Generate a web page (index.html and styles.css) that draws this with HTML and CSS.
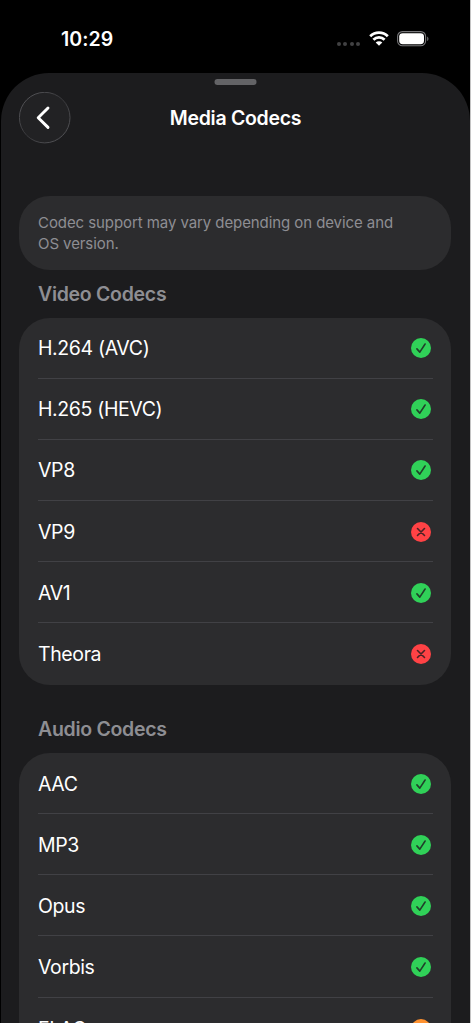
FILE: index.html
```html
<!DOCTYPE html>
<html lang="en">
<head>
<meta charset="utf-8">
<title>Media Codecs</title>
<link rel="stylesheet" href="styles.css">
</head>
<body>
<svg class="defs" width="0" height="0" aria-hidden="true">
  <symbol id="yes" viewBox="0 0 20 20"><circle cx="10" cy="10" r="10" fill="#30d158"/><path d="M5.9 10.9 8.8 14.1 14.1 6" fill="none" stroke="#20402a" stroke-width="1.6" stroke-linecap="round" stroke-linejoin="round"/></symbol>
  <symbol id="no" viewBox="0 0 20 20"><circle cx="10" cy="10" r="10" fill="#ff4245"/><path d="M6.5 6.5 13.5 13.5M13.5 6.5 6.5 13.5" fill="none" stroke="#4a2225" stroke-width="1.6" stroke-linecap="round"/></symbol>
  <symbol id="partial" viewBox="0 0 20 20"><circle cx="10" cy="10" r="10" fill="#ff9230"/><path d="M10 5.5V11M10 14v.2" fill="none" stroke="#4a3020" stroke-width="1.6" stroke-linecap="round"/></symbol>
</svg>
<div class="screen">
  <header class="status">
    <span class="time">10:29</span>
    <span class="signal"><i></i><i></i><i></i><i></i></span>
    <svg class="wifi" viewBox="0 0 20 15" width="20" height="15"><g fill="none" stroke="#fff" stroke-width="2.8"><path d="M1.2 5.2a12.6 12.6 0 0 1 17.6 0"/><path d="M4.4 8.7a8 8 0 0 1 11.2 0"/></g><path d="M6.7 11.6a4.7 4.7 0 0 1 6.6 0L10 14.8z" fill="#fff"/></svg>
    <svg class="battery" viewBox="0 0 32 16" width="32" height="16"><rect x=".6" y=".6" width="28" height="14.2" rx="4.8" fill="none" stroke="#77777a" stroke-width="1.1"/><rect x="2.2" y="2.2" width="24.8" height="11" rx="3.4" fill="#fff"/><path d="M30.2 5.4v4.6c1.7-.7 1.7-3.9 0-4.6z" fill="#77777a"/></svg>
  </header>
  <main class="sheet">
    <div class="grabber"></div>
    <nav class="nav">
      <button class="back" aria-label="Back"><svg viewBox="0 0 52 52" width="52" height="52"><defs><linearGradient id="rim" x1="0" y1="0" x2="1" y2="1"><stop offset="0" stop-color="#5a5a5e"/><stop offset=".5" stop-color="#39393c"/><stop offset="1" stop-color="#5a5a5e"/></linearGradient></defs><circle cx="25.7" cy="25.6" r="25.3" fill="#222224" stroke="url(#rim)"/><path d="M29 16 19.2 25.7 29 35.4" fill="none" stroke="#fff" stroke-width="2.9" stroke-linecap="round" stroke-linejoin="round"/></svg></button>
      <h1 class="title">Media Codecs</h1>
    </nav>
    <p class="card note">Codec support may vary depending on device and<br>OS version.</p>
    <h2 class="heading">Video Codecs</h2>
    <ul class="card list">
      <li class="row">H.264 (AVC)<svg class="mark"><use href="#yes"/></svg></li>
      <li class="row">H.265 (HEVC)<svg class="mark"><use href="#yes"/></svg></li>
      <li class="row">VP8<svg class="mark"><use href="#yes"/></svg></li>
      <li class="row">VP9<svg class="mark"><use href="#no"/></svg></li>
      <li class="row">AV1<svg class="mark"><use href="#yes"/></svg></li>
      <li class="row">Theora<svg class="mark"><use href="#no"/></svg></li>
    </ul>
    <h2 class="heading audio">Audio Codecs</h2>
    <ul class="card list">
      <li class="row">AAC<svg class="mark"><use href="#yes"/></svg></li>
      <li class="row">MP3<svg class="mark"><use href="#yes"/></svg></li>
      <li class="row">Opus<svg class="mark"><use href="#yes"/></svg></li>
      <li class="row">Vorbis<svg class="mark"><use href="#yes"/></svg></li>
      <li class="row">FLAC<svg class="mark"><use href="#partial"/></svg></li>
    </ul>
  </main>
</div>
</body>
</html>
```
FILE: styles.css
```css
* { box-sizing: border-box; margin: 0; padding: 0; }
html, body { height: 100%; overflow: hidden; }
body { background: #c4c4c4; font-family: Inter, "Liberation Sans", sans-serif; color: #fff; }
.defs { display: block; }
.screen { width: 470px; height: 1023px; background: #000; overflow: hidden; }
.status { height: 73px; display: flex; align-items: center; padding: 4px 41px 0 61px; }
.time { font-size: 19.5px; font-weight: 600; letter-spacing: 0.05px; margin-right: auto; }
.signal { display: flex; gap: 2.3px; margin: 10px 9px 0 0; }
.signal i { width: 4px; height: 4px; border-radius: 50%; background: #414143; }
.wifi { margin-right: 8px; }
.sheet { height: 950px; margin-left: 1px; padding: 6px 18px 0; background: #1c1c1e; border-radius: 48px 48px 0 0; overflow: hidden; }
.grabber { width: 42px; height: 6px; border-radius: 3px; background: #636366; margin: 0 auto; transform: translateX(-0.5px); }
.nav { display: grid; grid-template-columns: 52px 1fr 52px; align-items: center; margin-top: 6px; height: 53px; }
.back { width: 52px; height: 52px; border: 0; background: none; }
.back svg { display: block; }
.title { font-size: 19.5px; font-weight: 600; letter-spacing: -0.28px; text-align: center; }
.card { background: #2c2c2e; border-radius: 31px; margin-right: 0.6px; }
.note { margin-top: 52px; height: 74px; padding: 16px 19px 0; font-size: 15px; line-height: 21px; letter-spacing: -0.08px; color: #8e8e93; white-space: nowrap; }
.heading { margin: 11px 0 0 19px; height: 36.6px; font-size: 19.5px; line-height: 27px; font-weight: 600; letter-spacing: -0.29px; color: #8e8e93; }
.heading.audio { margin-top: 31px; height: 37.4px; }
.list { list-style: none; padding: 0 18px 0 19px; }
.row { height: 61.17px; padding-top: 1px; display: flex; align-items: center; justify-content: space-between; font-size: 19.5px; letter-spacing: -0.38px; border-bottom: 1px solid #414145; }
.row:last-child { border-bottom: 0; }
.mark { width: 20px; height: 20px; margin-right: 2px; }
```
